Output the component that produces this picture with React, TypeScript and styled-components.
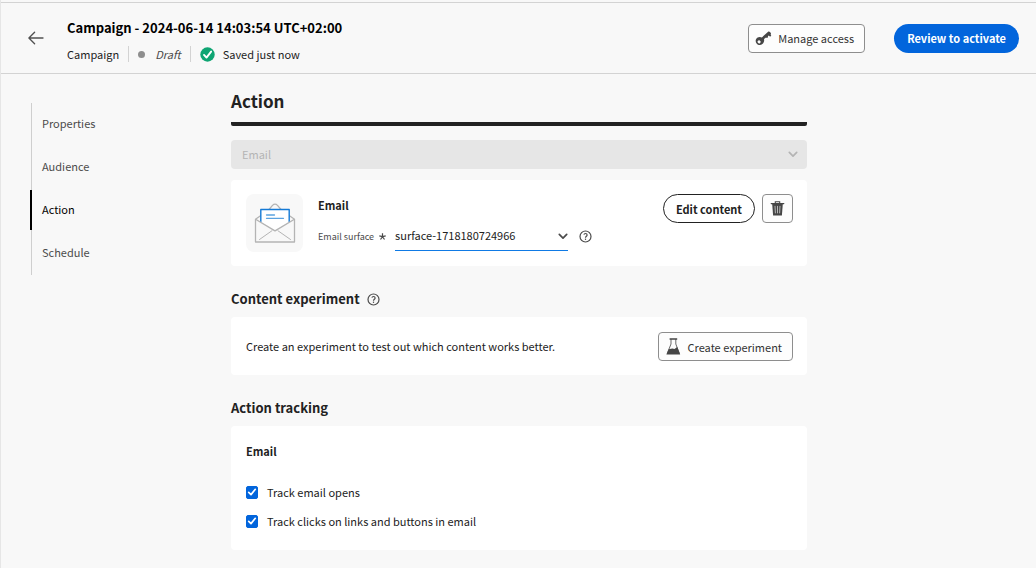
import React, { useState } from "react";
import styled, { createGlobalStyle, css } from "styled-components";

const GlobalStyle = createGlobalStyle`
  *, *::before, *::after { box-sizing: border-box; }
  body {
    margin: 0;
    background: #f8f8f8;
    color: #222;
    font-family: "Noto Sans CJK SC", "Open Sans", sans-serif;
    font-size: 11px;
    line-height: 18px;
  }
  button, input, select { font: inherit; color: inherit; }
  h1, h2, h3, p { margin: 0; }
  svg { display: block; flex: none; }
`;

const Page = styled.div`
  min-height: 100vh;
  padding-top: 2px;
  border-left: 1px solid #e6e6e6;
`;

const Header = styled.header`
  display: flex;
  align-items: center;
  gap: 29px;
  height: 72px;
  padding: 0 17px 0 27px;
  border-top: 1px solid #d3d3d3;
  border-bottom: 1px solid #d3d3d3;
`;

const BackButton = styled.button`
  display: flex;
  margin: 0 -6px 0 0;
  padding: 0;
  border: 0;
  background: none;
  color: #505050;
`;

const Heading = styled.div`
  flex: 1;
  display: flex;
  flex-direction: column;
  gap: 8px;
  padding-top: 6px;
`;

const Title = styled.h1`
  font-size: 13px;
  line-height: 18px;
  font-weight: 700;
  color: #000;
`;

const Meta = styled.div`
  display: flex;
  align-items: center;
  gap: 9px;
`;

const Divider = styled.span`
  width: 1px;
  height: 16px;
  background: #d3d3d3;
`;

const Dot = styled.span`
  width: 7px;
  height: 7px;
  margin-right: 1px;
  border-radius: 50%;
  background: #8e8e8e;
`;

const Draft = styled.em`
  color: #4b4b4b;
`;

const Status = styled.span`
  display: flex;
  align-items: center;
  gap: 8px;
`;

const Button = styled.button<{ $kind?: "accent" | "outline" }>`
  display: flex;
  align-items: center;
  justify-content: center;
  gap: 6px;
  height: 29px;
  padding: 0 10px 0 6px;
  border: 1px solid #8e8e8e;
  border-radius: 4px;
  background: #fdfdfd;
  color: #333;
  white-space: nowrap;
  ${(p) =>
    p.$kind === "accent" &&
    css`
      padding: 0 13px;
      border: 0;
      border-radius: 15px;
      background: #0265dc;
      color: #fff;
      font-weight: 700;
    `}
  ${(p) =>
    p.$kind === "outline" &&
    css`
      padding: 0 12px;
      border-color: #222;
      border-radius: 15px;
      background: #fff;
      color: #222;
      font-weight: 700;
    `}
`;

const IconButton = styled(Button)`
  width: 31px;
  padding: 0;
`;

const Body = styled.div`
  display: flex;
  align-items: flex-start;
  padding-left: 30px;
`;

const Nav = styled.nav`
  flex: none;
  width: 200px;
  margin-top: 29px;
  border-left: 1px solid #cfcfcf;
`;

const NavLink = styled.a<{ $active?: boolean }>`
  position: relative;
  display: flex;
  align-items: center;
  height: 43px;
  padding: 0 0 3px 10px;
  color: ${(p) => (p.$active ? "#000" : "#4b4b4b")};
  text-decoration: none;
  ${(p) =>
    p.$active &&
    css`
      &::before {
        content: "";
        position: absolute;
        left: -2px;
        top: 1px;
        bottom: 2px;
        width: 2px;
        background: #000;
      }
    `}
`;

const Main = styled.main`
  flex: 1;
  min-width: 0;
  max-width: 576px;
  padding: 15px 0 18px;
`;

const PageTitle = styled.h2`
  padding-bottom: 9px;
  border-bottom: 4px solid #222;
  border-radius: 2px;
  font-size: 17px;
  line-height: 24px;
`;

const SelectBox = styled.div<{ $block?: boolean }>`
  display: grid;
  align-items: center;
  width: ${(p) => (p.$block ? "auto" : "173px")};
  margin: ${(p) => (p.$block ? "14px 0 11px" : "0")};
  border-bottom: ${(p) => (p.$block ? "0" : "1px solid #0f7ae5")};
  color: ${(p) => (p.$block ? "#b4b4b4" : "#4b4b4b")};
  > * {
    grid-area: 1 / 1;
  }
  > svg {
    justify-self: end;
    margin-right: ${(p) => (p.$block ? "9px" : "0")};
    pointer-events: none;
  }
`;

const Select = styled.select<{ $block?: boolean }>`
  appearance: none;
  width: 100%;
  height: 28px;
  padding: 0 20px 2px 0;
  border: 0;
  border-radius: 0;
  background: transparent;
  color: #222;
  opacity: 1;
  ${(p) =>
    p.$block &&
    css`
      height: 29px;
      padding: 0 30px 2px 11px;
      border-radius: 4px;
      background: #e6e6e6;
      color: #b4b4b4;
    `}
`;

const Card = styled.section`
  padding: 16px 14px 14px 15px;
  border-radius: 4px;
  background: #fff;
`;

const RowCard = styled(Card)<{ $top?: boolean }>`
  display: flex;
  align-items: ${(p) => (p.$top ? "flex-start" : "center")};
  justify-content: space-between;
  gap: 15px;
  padding-top: ${(p) => (p.$top ? "14px" : "15px")};
`;

const Thumb = styled.div`
  display: flex;
  align-items: center;
  justify-content: center;
  width: 57px;
  height: 58px;
  border-radius: 8px;
  background: #f8f8f8;
`;

const Details = styled.div`
  flex: 1;
  display: flex;
  flex-direction: column;
  gap: 8px;
  padding-top: 2px;
`;

const CardTitle = styled.h3`
  font-size: 11px;
  line-height: 18px;
`;

const Field = styled.div`
  display: flex;
  align-items: center;
  gap: 9px;
`;

const FieldLabel = styled.label`
  display: flex;
  align-items: center;
  gap: 5px;
  color: #4b4b4b;
  font-size: 9px;
`;

const Help = styled.button`
  display: flex;
  margin-left: 2px;
  padding: 0;
  border: 0;
  background: none;
  color: #4b4b4b;
`;

const Description = styled.p`
  padding-bottom: 2px;
`;

const Actions = styled.div`
  display: flex;
  gap: 7px;
`;

const SectionTitle = styled.h2`
  display: flex;
  align-items: center;
  gap: 5px;
  padding: 23px 0 8px;
  font-size: 13px;
  line-height: 20px;
`;

const Checks = styled.div`
  display: flex;
  flex-direction: column;
  gap: 11px;
  padding: 23px 0 6px;
`;

const CheckLabel = styled.label`
  display: flex;
  align-items: center;
  gap: 9px;
`;

const CheckBox = styled.span`
  display: grid;
  place-items: center;
  > * {
    grid-area: 1 / 1;
  }
  > input {
    appearance: none;
    width: 12px;
    height: 13px;
    margin: 0;
    border: 1px solid #6e6e6e;
    border-radius: 2px;
    background: #fff;
  }
  > input:checked {
    border-color: #0265dc;
    background: #0265dc;
  }
  > svg {
    pointer-events: none;
  }
`;

const Chevron = () => (
  <svg width="10" height="7" viewBox="0 0 10 7" fill="none" stroke="currentColor" strokeWidth="1.7" strokeLinecap="round" strokeLinejoin="round">
    <path d="M1.3 1.4 5 5.1 8.7 1.4" />
  </svg>
);

const HelpIcon = () => (
  <svg width="13" height="13" viewBox="0 0 13 13" fill="none" stroke="currentColor" strokeWidth="1.2">
    <circle cx="6.5" cy="6.5" r="5.5" />
    <path d="M4.9 4.7c.2-.8.8-1.2 1.6-1.2 1 0 1.6.6 1.6 1.4 0 1.3-1.6 1.3-1.6 2.8" />
    <path d="M6.5 8.6v1.3" />
  </svg>
);

const BackArrow = () => (
  <svg width="16" height="14" viewBox="0 0 16 14" fill="none" stroke="currentColor" strokeWidth="1.3" strokeLinecap="round" strokeLinejoin="round">
    <path d="M15 7H1M6.6 1.2.9 7l5.7 5.8" />
  </svg>
);

const SavedIcon = () => (
  <svg width="15" height="15" viewBox="0 0 15 15">
    <circle cx="7.5" cy="7.5" r="7.2" fill="#0fa573" />
    <path d="m4 7.9 2.5 2.7 4.6-6" fill="none" stroke="#fff" strokeWidth="1.9" strokeLinecap="round" strokeLinejoin="round" />
  </svg>
);

const KeyIcon = () => (
  <svg width="17" height="15" viewBox="0 0 17 15" fill="#464646">
    <path
      fillRule="evenodd"
      d="M13.1.7c.8-.3 1.6 0 2.1.6l.8 1-.3 1.4.6.9-1.2 1.1-1.3-1.2-.9.7.1 1.1-1 .8-1-.7-2 1.7c.5 1.8-.1 3.8-1.6 5-1.8 1.4-4.4 1.2-5.8-.6C.2 10.8.4 8.2 2.2 6.8c1.4-1.1 3.3-1.2 4.7-.4zM3.3 9.6a1.5 1.5 0 1 0 1.9 2.3 1.5 1.5 0 0 0-1.9-2.3z"
    />
  </svg>
);

const FlaskIcon = () => (
  <svg width="17" height="17" viewBox="0 0 17 17">
    <path d="M6 1v5L2.2 15.5h12.200L10.800 6V1" fill="none" stroke="#6a6a6a" strokeWidth="1" strokeLinejoin="round" />
    <path d="M4.600.300h7.600v1.400H4.600zM3.700 11.300l3.600-.700 2.200.500 2.700-2 3 7.300H1.400z" fill="#464646" />
  </svg>
);

const TrashIcon = () => (
  <svg width="15" height="15" viewBox="0 0 15 15" fill="none" stroke="#464646">
    <path d="M5.3 2V.7h4.400V2" strokeWidth="1.1" />
    <path d="M1.2 2.6h12.600" strokeWidth="1.2" strokeLinecap="round" />
    <path d="M2.2 3h10.600l-.900 11.400H3.100z" fill="#464646" stroke="none" />
    <path d="m5 4.900.400 7.400M7.500 4.900v7.400M10 4.900l-.400 7.400" stroke="#c4c4c4" strokeWidth=".9" />
  </svg>
);

const EnvelopeIcon = () => (
  <svg width="42" height="42" viewBox="0 0 42 42" fill="none" strokeLinejoin="round" strokeLinecap="round">
    <path d="M15 7.5 18.5 3.400Q21 .900 23.500 3.400L27 7.500M6.500 13.700 1.500 17.300V40H40.500V17.300L35.500 13.700" stroke="#b4b4b4" strokeWidth="1.3" />
    <path d="M6.8 19.500V7.500H35.200V19.500L21 28.800Z" fill="#fff" />
    <path d="M6.8 19.500V7.500H35.200V19.500" stroke="#147ad6" strokeWidth="1.4" />
    <path d="M2 17.500 21 28.800 40 17.500" stroke="#b4b4b4" strokeWidth="1.4" />
    <path d="m5.500 37.500 12.500-8.800M36.500 37.500 24 28.800" stroke="#b4b4b4" strokeWidth="1" />
    <path d="M12.500 13h8M12.500 16.300h17" stroke="#5aa2e0" strokeWidth="1.3" />
  </svg>
);

const Required = () => (
  <svg width="7" height="7" viewBox="0 0 7 7" stroke="#4b4b4b" strokeWidth="1.2">
    <path d="M3.5.2v3.500M.3 2.800l3.200.900M6.700 2.800l-3.200.900M1.500 6.500l2-2.800M5.500 6.500l-2-2.800" />
  </svg>
);

const Tick = () => (
  <svg width="10" height="10" viewBox="0 0 10 10" fill="none" stroke="#fff" strokeWidth="1.7" strokeLinecap="round" strokeLinejoin="round">
    <path d="M1.7 5.300 4 7.600 8.300 2.300" />
  </svg>
);

const steps = ["Properties", "Audience", "Action", "Schedule"];

function Check({ label }: { label: string }) {
  const [checked, setChecked] = useState(true);
  return (
    <CheckLabel>
      <CheckBox>
        <input type="checkbox" checked={checked} onChange={(e) => setChecked(e.target.checked)} />
        {checked && <Tick />}
      </CheckBox>
      {label}
    </CheckLabel>
  );
}

export default function App() {
  return (
    <Page>
      <GlobalStyle />
      <Header>
        <BackButton aria-label="Back">
          <BackArrow />
        </BackButton>
        <Heading>
          <Title>Campaign - 2024-06-14 14:03:54 UTC+02:00</Title>
          <Meta>
            <span>Campaign</span>
            <Divider />
            <Dot />
            <Draft>Draft</Draft>
            <Divider />
            <Status>
              <SavedIcon />
              Saved just now
            </Status>
          </Meta>
        </Heading>
        <Button>
          <KeyIcon />
          Manage access
        </Button>
        <Button $kind="accent">Review to activate</Button>
      </Header>
      <Body>
        <Nav>
          {steps.map((step) => (
            <NavLink key={step} href={`#${step.toLowerCase()}`} $active={step === "Action"}>
              {step}
            </NavLink>
          ))}
        </Nav>
        <Main>
          <PageTitle>Action</PageTitle>
          <SelectBox $block>
            <Select $block disabled aria-label="Action type">
              <option>Email</option>
            </Select>
            <Chevron />
          </SelectBox>
          <RowCard $top>
            <Thumb>
              <EnvelopeIcon />
            </Thumb>
            <Details>
              <CardTitle>Email</CardTitle>
              <Field>
                <FieldLabel htmlFor="surface">
                  Email surface
                  <Required />
                </FieldLabel>
                <SelectBox>
                  <Select id="surface">
                    <option>surface-1718180724966</option>
                  </Select>
                  <Chevron />
                </SelectBox>
                <Help aria-label="About email surface">
                  <HelpIcon />
                </Help>
              </Field>
            </Details>
            <Actions>
              <Button $kind="outline">Edit content</Button>
              <IconButton aria-label="Delete">
                <TrashIcon />
              </IconButton>
            </Actions>
          </RowCard>
          <SectionTitle>
            Content experiment
            <Help aria-label="About content experiment">
              <HelpIcon />
            </Help>
          </SectionTitle>
          <RowCard>
            <Description>Create an experiment to test out which content works better.</Description>
            <Button>
              <FlaskIcon />
              Create experiment
            </Button>
          </RowCard>
          <SectionTitle>Action tracking</SectionTitle>
          <Card>
            <CardTitle>Email</CardTitle>
            <Checks>
              <Check label="Track email opens" />
              <Check label="Track clicks on links and buttons in email" />
            </Checks>
          </Card>
        </Main>
      </Body>
    </Page>
  );
}
